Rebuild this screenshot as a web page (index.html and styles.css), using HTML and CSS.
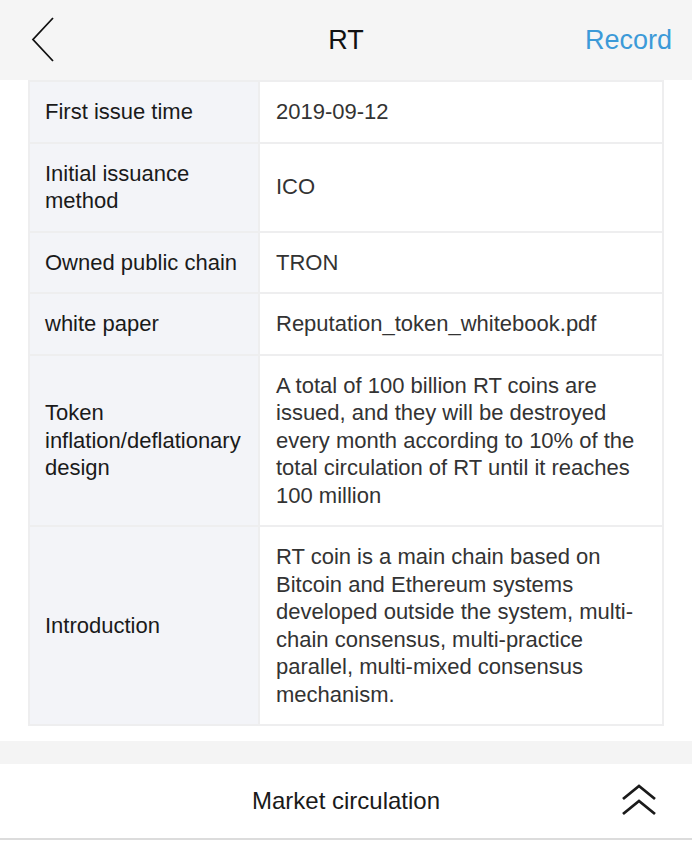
FILE: index.html
```html
<!DOCTYPE html>
<html lang="en">
<head>
    <meta charset="UTF-8">
    <meta name="viewport" content="width=device-width, initial-scale=1.0">
    <title>RT | Coin details</title>
    <link rel="stylesheet" href="styles.css">
</head>
<body>
    <header class="topbar">
        <a class="back" href="#">
            <svg width="30" height="48" viewBox="0 0 30 48">
                <polyline points="24,2 4,23.5 24,45" fill="none" stroke="#111" stroke-width="1.8"/>
            </svg>
        </a>
        <h1 class="title">RT</h1>
        <a class="record" href="#">Record</a>
    </header>

    <main class="coin-info">
        <table class="facts">
            <tr>
                <th>First issue time</th>
                <td>2019-09-12</td>
            </tr>
            <tr>
                <th>Initial issuance method</th>
                <td>ICO</td>
            </tr>
            <tr>
                <th>Owned public chain</th>
                <td>TRON</td>
            </tr>
            <tr>
                <th>white paper</th>
                <td>Reputation_token_whitebook.pdf</td>
            </tr>
            <tr>
                <th>Token inflation/deflationary design</th>
                <td>A total of 100 billion RT coins are issued, and they will be destroyed every month according to 10% of the total circulation of RT until it reaches 100 million</td>
            </tr>
            <tr>
                <th>Introduction</th>
                <td>RT coin is a main chain based on Bitcoin and Ethereum systems developed outside the system, multi-chain consensus, multi-practice parallel, multi-mixed consensus mechanism.</td>
            </tr>
        </table>
    </main>

    <div class="divider"></div>

    <section class="collapse-bar">
        <span></span>
        <h2>Market circulation</h2>
        <svg class="toggle" width="38" height="35" viewBox="0 0 38 35">
            <polyline points="3,15 19,2 35,15" fill="none" stroke="#1a1a1a" stroke-width="2.8"/>
            <polyline points="3,30 19,17 35,30" fill="none" stroke="#1a1a1a" stroke-width="2.8"/>
        </svg>
    </section>
</body>
</html>
```

FILE: styles.css
```css
body {
    font-family: 'Liberation Sans', Arial, sans-serif;
    margin: 0;
    padding: 0;
    background-color: #fff;
    color: #1a1a1a;
}

.topbar {
    display: grid;
    grid-template-columns: 1fr auto 1fr;
    align-items: center;
    height: 80px;
    padding: 0 20px;
    background-color: #f5f5f5;
}

.topbar .back {
    display: flex;
    align-items: center;
    margin-left: 9px;
}

.topbar .title {
    margin: 0;
    font-size: 27px;
    font-weight: normal;
    color: #111;
}

.topbar .record {
    justify-self: end;
    text-decoration: none;
    font-size: 27px;
    color: #3c9ad8;
}

.coin-info {
    padding: 0 28px;
}

.facts {
    width: 636px;
    border-spacing: 2px;
    background-color: #eeeeef;
    font-size: 22px;
    line-height: 27.5px;
}

.facts th,
.facts td {
    padding: 16px;
    vertical-align: middle;
    text-align: left;
    font-weight: normal;
}

.facts th {
    width: 197px;
    padding-left: 15px;
    background-color: #f3f4f8;
    color: #1a1a1a;
}

.facts td {
    background-color: #fff;
    color: #333;
}

.divider {
    height: 23px;
    margin-top: 15px;
    background-color: #f4f4f4;
}

.collapse-bar {
    display: grid;
    grid-template-columns: 1fr auto 1fr;
    align-items: center;
    height: 74px;
    padding: 0 34px;
    border-bottom: 2px solid #dcdcdc;
}

.collapse-bar h2 {
    margin: 0;
    font-size: 24px;
    font-weight: normal;
    color: #1a1a1a;
}

.collapse-bar .toggle {
    justify-self: end;
}
```
